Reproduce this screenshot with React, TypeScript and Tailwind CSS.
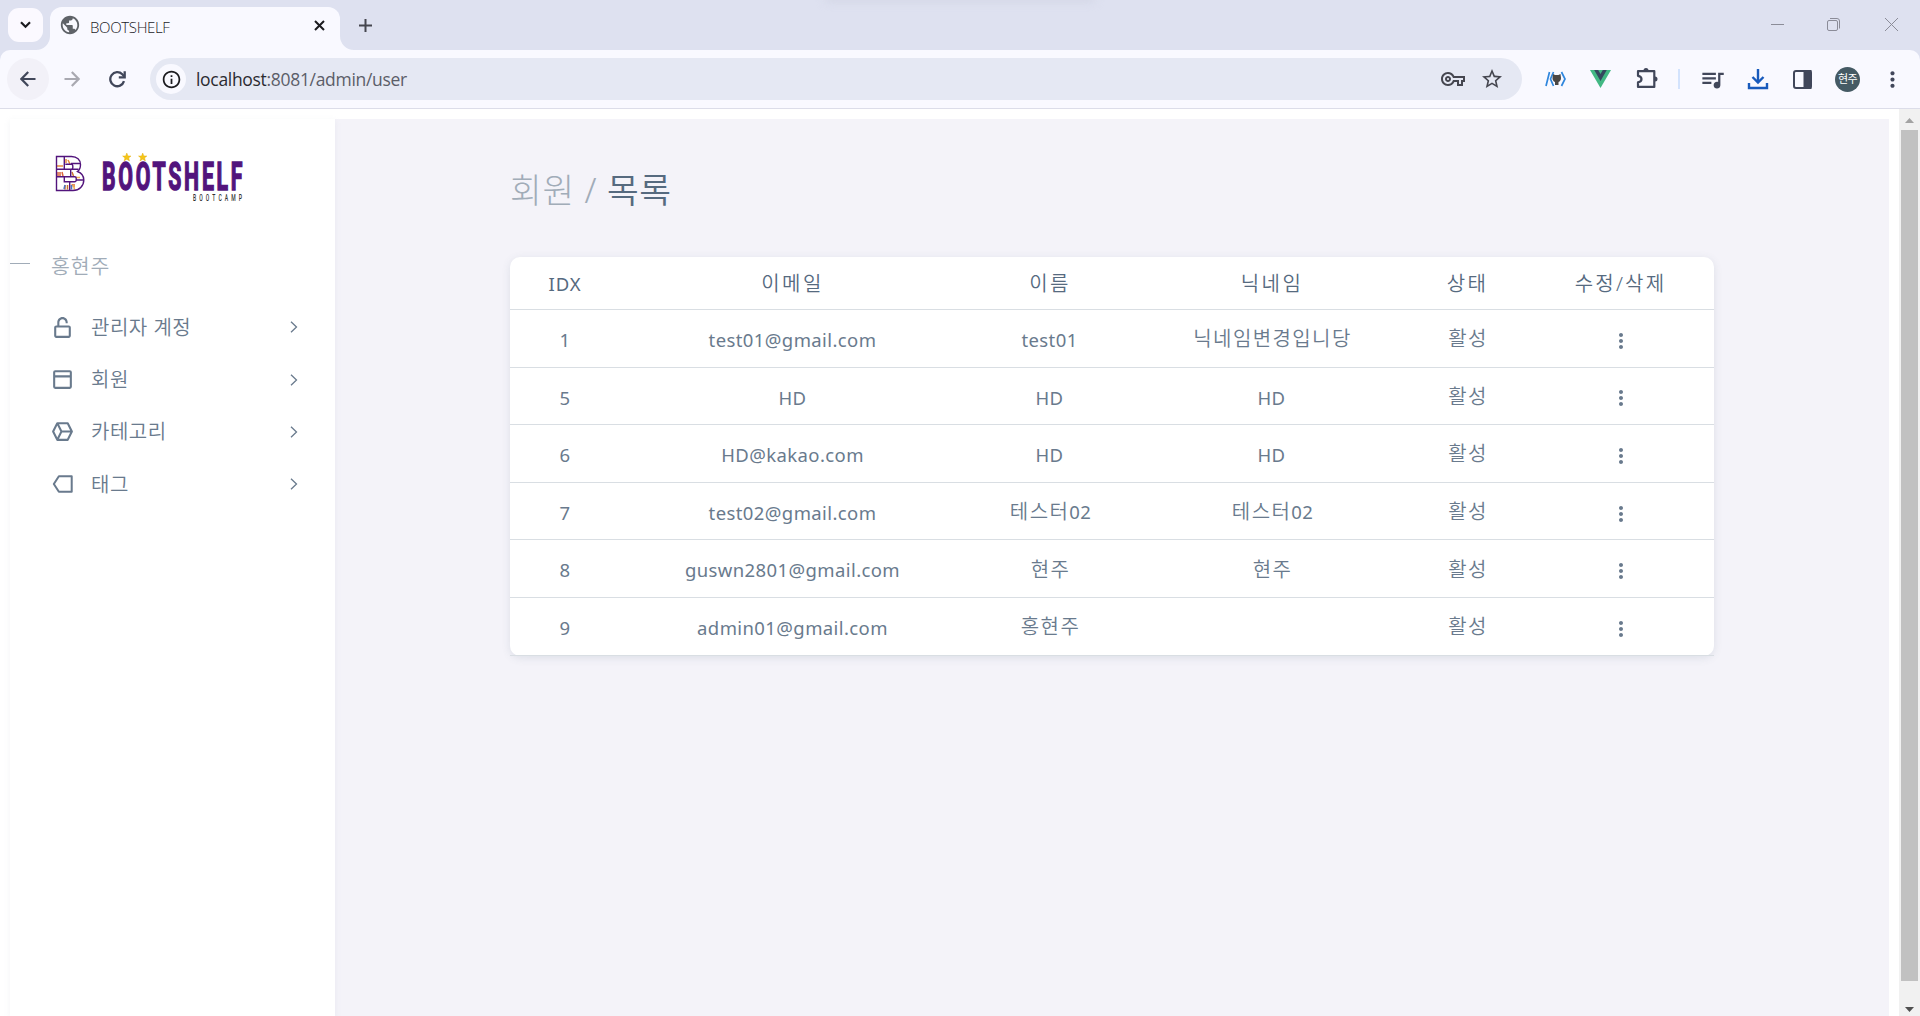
import React from "react";
import { BiLockOpenAlt, BiDockTop, BiCubeAlt, BiDotsVerticalRounded } from "react-icons/bi";
import {
  MdOutlineInfo,
  MdPublic,
  MdOutlineVpnKey,
  MdStarBorder,
  MdQueueMusic,
  MdMoreVert,
} from "react-icons/md";

const columns = [
  { label: "IDX", style: "mt-[2px] tracking-[1px] text-[18.500px] font-normal" },
  { label: "이메일", style: "mt-[2px] tracking-[2.4px]" },
  { label: "이름", style: "mt-[2px] ml-[1px] tracking-[2.4px]" },
  { label: "닉네임", style: "mt-[2px] ml-[1px] tracking-[2.4px]" },
  { label: "상태", style: "mt-[2px] ml-[1px] tracking-[2.4px]" },
  { label: "수정/삭제", style: "mt-[2px] ml-[2px] tracking-[2.2px]" },
];

const users = [
  ["1", "test01@gmail.com", "test01", "닉네임변경입니당"],
  ["5", "HD", "HD", "HD"],
  ["6", "HD@kakao.com", "HD", "HD"],
  ["7", "test02@gmail.com", "테스터02", "테스터02"],
  ["8", "guswn2801@gmail.com", "현주", "현주"],
  ["9", "admin01@gmail.com", "홍현주", ""],
];

const hangul = (s: string) => /[가-힣]/.test(s);

function TagIcon() {
  return (
    <svg width="22" height="22" viewBox="0 0 24 24" fill="none" stroke="currentColor" strokeWidth="2.200" strokeLinejoin="round">
      <path d="M7.500 3.500H21.500v17H7.500L2 12z" />
    </svg>
  );
}

const menu = [
  { label: "관리자 계정", icon: <BiLockOpenAlt size={25} /> },
  { label: "회원", icon: <BiDockTop size={25} /> },
  { label: "카테고리", icon: <BiCubeAlt size={25} /> },
  { label: "태그", icon: <TagIcon /> },
];

function Star({ x, y }: { x: number; y: number }) {
  return (
    <path
      transform={`translate(${x} ${y})`}
      d="M0-4.200L1.200-1.300 4.200-1.200 1.900.700 2.700 3.700 0 2-2.700 3.700-1.900.700-4.200-1.200-1.200-1.300z"
      fill="#f5c518"
      stroke="#e0a800"
      strokeWidth="0.400"
    />
  );
}

function Logo() {
  return (
    <svg width="190" height="52" viewBox="0 0 190 52" className="block overflow-visible">
      <g strokeWidth="1.500">
        <path d="M12 9v4M14 10l2 4M3 16h6M17.500 37l1-3" stroke="#e58a3c" />
        <path d="M4 22v4M6 22v4M8 22l1 4M20 37v-3" stroke="#d9663b" />
        <path d="M11 35v4.500M13.500 35v4.500M18 22l1.500 4" stroke="#c9752f" />
        <path d="M10 39l1-4M17.500 35v4.500" stroke="#4b74c4" />
        <path d="M22 27.500h4M19.500 35l1 4.500" stroke="#f0ad4e" />
      </g>
      <g fill="none" stroke="#52147c" strokeWidth="1.400">
        <path d="M2.500 6.500h15c5.500 0 9 3.500 9 8 0 3-1 5.500-3 7 4 1.500 6.300 4.800 6.300 8.500 0 6-4.500 10.500-10.800 10.500H2.500z" />
        <path d="M10.300 6.500v12.800M11.300 14.300h6a1.500 1.500 0 0 1 1.500 1.500v2a1.500 1.500 0 0 1-1.500 1.500M2.500 19.300h22M16.700 19.300v7.400M2.500 26.700h18.200a1.500 1.500 0 0 1 1.500 1.500v2a1.500 1.500 0 0 1-1.500 1.500H10.300v-5M15.700 31.700v8.800M17 13.500h9M22.500 30h7" />
      </g>
      <text
        transform="translate(48 39.500) scale(0.56 1)"
        fontSize="38"
        fontWeight="700"
        fontFamily="Roboto, sans-serif"
        fill="#52147c"
        stroke="#52147c"
        strokeWidth="1.500"
        textLength="251"
      >
        BOOTSHELF
      </text>
      <Star x={72.800} y={7.200} />
      <Star x={88.700} y={7.200} />
      <text
        transform="translate(139 50.700) scale(0.62 1)"
        fontSize="8.200"
        fontWeight="500"
        fontFamily="Roboto, sans-serif"
        fill="#333"
        textLength="79"
      >
        BOOTCAMP
      </text>
    </svg>
  );
}

function TabStrip() {
  return (
    <div className="relative flex h-[50px] items-start bg-[#dee1f0]">
      <div className="absolute left-[825px] -top-[6px] h-[8px] w-[270px] rounded-full bg-[#d3d6e5] blur-[4px]" />
      <div className="ml-2 mt-2 flex h-[34px] w-[35px] items-center justify-center rounded-[11px] bg-[#fbf9ff] text-[#1b1b1f]">
        <svg width="11" height="8" viewBox="0 0 11 8" fill="none" stroke="currentColor" strokeWidth="2.200">
          <path d="M1 1.200l4.500 4.500L10 1.200" />
        </svg>
      </div>
      <div className="relative ml-[7px] mt-[7px] flex h-[43px] w-[290px] items-center rounded-t-[12px] bg-[#f9f9ff]">
        <svg className="absolute -left-[14px] bottom-0" width="14" height="14">
          <path d="M14 0v14H0A14 14 0 0 0 14 0z" fill="#f9f9ff" />
        </svg>
        <svg className="absolute -right-[14px] bottom-0" width="14" height="14">
          <path d="M0 0v14h14A14 14 0 0 1 0 0z" fill="#f9f9ff" />
        </svg>
        <MdPublic size={22} className="-mt-[7px] ml-[9px] text-[#5f6368]" />
        <span className="-mt-[3px] ml-[9px] w-[204px] font-['Open_Sans'] text-[15px] font-light tracking-[-0.35px] text-[#1b1b1f]">
          BOOTSHELF
        </span>
        <svg className="-mt-[7px] ml-[20px] text-[#1b1b1f]" width="11" height="11" viewBox="0 0 11 11" stroke="currentColor" strokeWidth="2">
          <path d="M1 1l9 9M10 1l-9 9" />
        </svg>
      </div>
      <svg className="ml-[19px] mt-[19px] text-[#45464f]" width="13" height="13" viewBox="0 0 13 13" stroke="currentColor" strokeWidth="2">
        <path d="M0 6.500h13M6.500 0v13" />
      </svg>
      <div className="ml-auto mr-[22px] mt-[18px] flex items-center text-[#8b8c98]">
        <svg width="13" height="13" viewBox="0 0 13 13" stroke="currentColor"><path d="M0 6.500h13" /></svg>
        <svg className="ml-[43px]" width="13" height="13" viewBox="0 0 13 13" fill="none" stroke="currentColor">
          <rect x=".5" y="2.500" width="10" height="10" rx="1.500" />
          <path d="M3 .5h7a2.500 2.500 0 0 1 2.500 2.500v7.500" />
        </svg>
        <svg className="ml-[45px]" width="13" height="13" viewBox="0 0 13 13" stroke="currentColor"><path d="M0 0l13 13M13 0L0 13" /></svg>
      </div>
    </div>
  );
}

function Toolbar() {
  return (
    <div className="bg-[#dee1f0]">
      <div className="flex h-[59px] items-center rounded-t-[10px] border-b border-[#dcdde9] bg-[#f9f9ff] text-[#41475a]">
        <div className="ml-[7px] flex h-[42px] w-[42px] items-center justify-center rounded-full bg-[#f2f1f8]">
          <svg width="16" height="16" viewBox="0 0 16 16" fill="none" stroke="currentColor" strokeWidth="2.200">
            <path d="M15.500 8H2M8.200 1L1.400 8l6.800 7" />
          </svg>
        </div>
        <svg className="ml-[15px] text-[#a9a9b1]" width="16" height="16" viewBox="0 0 16 16" fill="none" stroke="currentColor" strokeWidth="2.200">
          <path d="M.5 8H14M7.800 1l6.800 7-6.800 7" />
        </svg>
        <svg className="ml-[29px]" width="17" height="17" viewBox="0 0 17 17" fill="none" stroke="currentColor" strokeWidth="2.300">
          <path d="M15 10.200A7 7 0 1 1 13.300 3.300L15.300 5.500" />
          <path d="M15.700 .3v6.100H9.800" />
        </svg>
        <div className="ml-[24px] flex h-[42px] w-[1372px] items-center rounded-full bg-[#e5e8f3]">
          <div className="ml-[6px] flex h-[30px] w-[30px] items-center justify-center rounded-full bg-[#f9f9ff] text-[#1b1b1f]">
            <MdOutlineInfo size={21} />
          </div>
          <span className="ml-[10px] font-['Open_Sans'] text-[17.500px] font-normal tracking-[-0.31px] text-[#5b5d68]">
            <span className="text-[#2b2b30]">localhost</span>:8081/admin/user
          </span>
          <MdOutlineVpnKey size={24} className="ml-auto text-[#45464f]" />
          <MdStarBorder size={24} className="ml-[15px] mr-[18px] text-[#45464f]" stroke="none" />
        </div>
        <svg className="ml-[23px]" width="21" height="18" viewBox="0 0 21 18" fill="none" strokeWidth="1.700">
          <path d="M4.500 2L1 16M8.500 2L5.500 9l3 7M16.500 2l3.500 7-3.500 7" stroke="#2f86dd" />
          <path d="M8 4l2 1h3.500l2-1 .5 4c0 2-1 3.500-2.500 4v3h-3.500v-3C8.500 11.500 7.500 10 7.500 8z" fill="#4b4744" />
        </svg>
        <svg className="ml-[24px]" width="21" height="18" viewBox="0 0 21 18">
          <path d="M0 0h21L10.500 18z" fill="#42b883" />
          <path d="M4.200 0h4l2.300 4 2.300-4h4L10.500 11z" fill="#35495e" />
        </svg>
        <svg className="ml-[25px] -mt-[2px]" width="22" height="21" viewBox="0 0 22 21" fill="none" stroke="currentColor" strokeWidth="2.200">
          <path d="M2 3.200h16.300v15.700H2v-4.600c2.300-.4 3.500-1.700 3.500-3.300S4.300 8.200 2 7.800z" strokeLinejoin="round" />
          <path d="M7.500 2.500a2.500 2.500 0 0 1 5 0zM19 8.500a2.500 2.500 0 0 1 0 5z" fill="currentColor" stroke="none" />
        </svg>
        <div className="ml-[20px] h-[20px] w-[2px] bg-[#d3e3fd]" />
        <MdQueueMusic size={27} className="ml-[19px]" />
        <svg className="ml-[21px] text-[#185abc]" width="22" height="22" viewBox="0 0 22 22" fill="none" stroke="currentColor" strokeWidth="2.400">
          <path d="M11 1v13M5.500 9l5.500 5.500L16.500 9M2 15v5h18v-5" />
        </svg>
        <svg className="ml-[24px]" width="19" height="19" viewBox="0 0 19 19" fill="none" stroke="currentColor" strokeWidth="2">
          <rect x="1" y="1" width="17" height="17" rx="2" />
          <path d="M11.500 1h6v17h-6z" fill="currentColor" />
        </svg>
        <div className="ml-[23px] flex h-[25px] w-[25px] items-center justify-center rounded-full bg-[#455a64] text-[11px] tracking-[-0.5px] text-white">
          현주
        </div>
        <MdMoreVert size={25} className="ml-[20px]" />
      </div>
    </div>
  );
}

function Sidebar() {
  return (
    <aside className="z-10 w-[325px] shrink-0 bg-white shadow-[0_2px_6px_rgba(161,172,184,0.14)]">
      <div className="ml-[44px] mt-[31px] h-[52px]">
        <Logo />
      </div>
      <div className="mt-[49px] flex h-[30px] items-center text-[20.500px] font-[350] text-[#a1acb8]">
        <span className="-mt-[6px] h-px w-[20px] bg-[#a1acb8]" />
        <span className="ml-[21px] tracking-[0.9px]">홍현주</span>
      </div>
      <nav className="mt-[20px] text-[#697a8d]">
        {menu.map((m) => (
          <div key={m.label} className="flex h-[52.400px] items-center">
            <span className="ml-[40px] flex w-[25px] justify-center">{m.icon}</span>
            <span className="ml-[16px] mt-[1px] text-[20px] font-[350] tracking-[0.5px]">{m.label}</span>
            <svg className="ml-auto mr-[37px]" width="8" height="12" viewBox="0 0 8 12" fill="none" stroke="currentColor" strokeWidth="1.300">
              <path d="M1 .7L6.500 6 1 11.300" />
            </svg>
          </div>
        ))}
      </nav>
    </aside>
  );
}

function Cell({ text }: { text: string }) {
  if (!hangul(text)) return <span className="mt-[3px] text-[18.500px] tracking-[0.4px]">{text}</span>;
  const [, name, digits] = text.match(/^(\D+)(\d*)$/) ?? ["", text, ""];
  return (
    <span className="ml-[2px] mt-[2px] text-[20px] font-[350] tracking-[1.400px]">
      {name}
      {digits && <span className="text-[18.500px] font-normal tracking-[0.36px]">{digits}</span>}
    </span>
  );
}

function UserTable() {
  const grid = "grid grid-cols-[110px_345px_169px_275px_116px_189px] items-center justify-items-center border-b border-[#d9dee3]";
  return (
    <div className="w-[1204px] rounded-[10px] bg-white shadow-[0_2px_8px_rgba(67,89,113,0.13)]">
      <div className={grid + " h-[53px] text-[20px] font-[350] text-[#566a7f]"}>
        {columns.map((c) => (
          <span key={c.label} className={c.style}>
            {c.label}
          </span>
        ))}
      </div>
      {users.map((row) => (
        <div key={row[0]} className={grid + " h-[57.600px] text-[#697a8d]"}>
          {row.map((cell, i) => (
            <Cell key={i} text={cell} />
          ))}
          <Cell text="활성" />
          <BiDotsVerticalRounded size={24} className="ml-[2px] mt-[5px]" />
        </div>
      ))}
    </div>
  );
}

export default function App() {
  return (
    <div className="flex h-[1016px] w-[1920px] flex-col overflow-hidden bg-white font-['Noto_Sans','Noto_Sans_CJK_KR',sans-serif]">
      <TabStrip />
      <Toolbar />
      <div className="flex min-h-0 flex-1">
        <div className="flex min-w-0 flex-1 px-[10px] pt-[10px]">
          <Sidebar />
          <main className="flex-1 bg-[#f4f3f9] pl-[175px]">
            <h1 className="mt-[43px] flex h-[56px] items-center text-[34.500px] font-light tracking-[0.7px] text-[#566a7f]">
              <span className="whitespace-pre text-[#a1acb8]">회원 / </span>
              <span className="font-[350]">목록</span>
            </h1>
            <div className="mt-[39px]">
              <UserTable />
            </div>
          </main>
        </div>
        <div className="flex w-[21px] flex-col items-center bg-[#f1f1f1]">
          <svg className="mt-[9px]" width="9" height="5"><path d="M0 5l4.500-5L9 5z" fill="#a3a3a3" /></svg>
          <div className="mt-[7px] h-[851px] w-[17px] bg-[#c1c1c1]" />
          <svg className="mt-[26px]" width="9" height="5"><path d="M0 0l4.500 5L9 0z" fill="#505050" /></svg>
        </div>
      </div>
    </div>
  );
}
